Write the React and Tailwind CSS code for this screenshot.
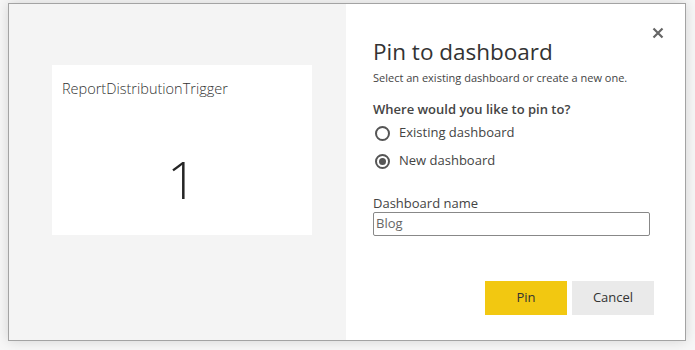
export default function App() {
  return (
    <div className="w-[695px] h-[350px] bg-[#f7f7f7] pt-[3px] pl-[8px]" style={{ fontFamily: '"Open Sans", "Noto Sans", sans-serif' }}>
      <div className="w-[678px] h-[338px] border border-[#a3a3a3] flex shadow-[0_0_12px_rgba(0,0,0,0.15)] bg-white">
        <div className="w-[337px] h-full bg-[#f4f4f4] pl-[43px] pt-[61px]">
          <div className="w-[260px] h-[170px] bg-white pl-[10px] pt-[14px] flex flex-col">
            <div className="text-[14.5px] leading-[20px] text-[#333] font-light">ReportDistributionTrigger</div>
            <div className="flex-1 flex justify-center pr-[10px] pt-[50px]">
              <span className="text-[52px] leading-[60px] font-light text-[#252525]">1</span>
            </div>
          </div>
        </div>
        <div className="flex-1 relative pl-[27px] pt-[33px] text-[#333]">
          <button className="absolute right-[20px] top-[22px] w-[14px] h-[14px] flex items-center justify-center">
            <svg width="12" height="12" viewBox="0 0 12 12">
              <path d="M1.5 1.5 L10.5 10.5 M10.5 1.5 L1.5 10.5" stroke="#666" strokeWidth="2.2" />
            </svg>
          </button>
          <div className="text-[22.5px] leading-[30px] text-[#333]">Pin to dashboard</div>
          <div className="text-[11px] leading-[14px] mt-[4px] text-[#444]">Select an existing dashboard or create a new one.</div>
          <div className="text-[13px] leading-[18px] mt-[15px] font-semibold text-[#444]">Where would you like to pin to?</div>
          <div className="flex items-center mt-[5px] h-[20px]">
            <span className="w-[15px] h-[15px] rounded-full border-2 border-[#555] ml-[2px]"></span>
            <span className="ml-[9px] text-[13px] text-[#444]">Existing dashboard</span>
          </div>
          <div className="flex items-center mt-[8px] h-[20px]">
            <span className="w-[15px] h-[15px] rounded-full border-2 border-[#555] ml-[2px] flex items-center justify-center">
              <span className="w-[7px] h-[7px] rounded-full bg-[#555]"></span>
            </span>
            <span className="ml-[9px] text-[13px] text-[#444]">New dashboard</span>
          </div>
          <div className="text-[13px] leading-[18px] mt-[23px] text-[#444]">Dashboard name</div>
          <div className="w-[277px] h-[24px] border border-[#888] rounded-[2px] flex items-center pl-[2px] text-[13px] text-[#666]">Blog</div>
          <div className="flex justify-end gap-[5px] mt-[45px] pr-[31px]">
            <button className="w-[82px] h-[34px] bg-[#f2c811] text-[13px] text-[#333]">Pin</button>
            <button className="w-[82px] h-[34px] bg-[#eaeaea] text-[13px] text-[#333]">Cancel</button>
          </div>
        </div>
      </div>
    </div>
  );
}
